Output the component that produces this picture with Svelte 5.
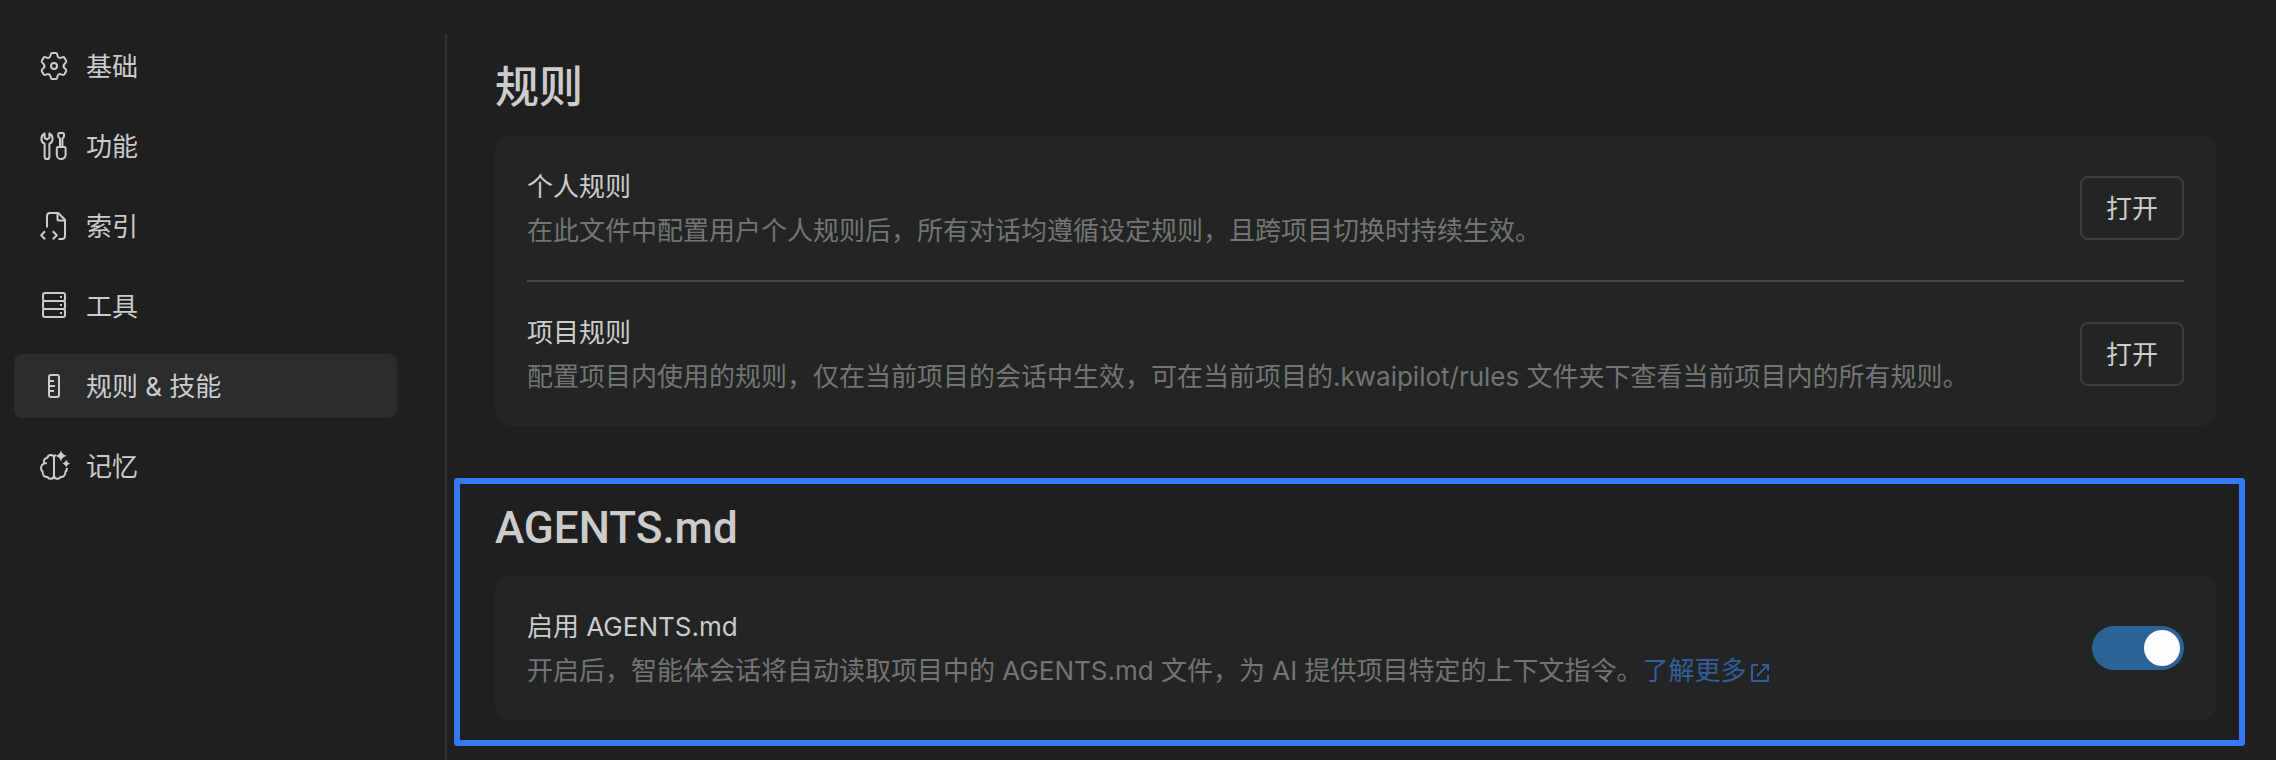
<script>
  // Settings page: rules & skills tab with the AGENTS.md switch.
  const navItems = [
    { id: 'basic', label: '基础' },
    { id: 'features', label: '功能' },
    { id: 'index', label: '索引' },
    { id: 'tools', label: '工具' },
    { id: 'rules', label: '规则 & 技能' },
    { id: 'memory', label: '记忆' }
  ];

  const rules = [
    {
      id: 'personal',
      title: '个人规则',
      desc: '在此文件中配置用户个人规则后，所有对话均遵循设定规则，且跨项目切换时持续生效。'
    },
    {
      id: 'project',
      title: '项目规则',
      desc: '配置项目内使用的规则，仅在当前项目的会话中生效，可在当前项目的.kwaipilot/rules 文件夹下查看当前项目内的所有规则。'
    }
  ];

  let active = $state('rules');
  let agentsEnabled = $state(true);
</script>

<div class="settings">
  <nav class="sidebar">
    {#each navItems as item}
      <a
        class="nav-item"
        class:active={active === item.id}
        href={`#${item.id}`}
        onclick={() => (active = item.id)}
      >
        <svg class="nav-icon" viewBox="0 0 28 28" aria-hidden="true">
          {#if item.id === 'basic'}
            <g transform="translate(14 14)">
              <path d="M-2-13H2C3.4-13 3.2-11.6 3.4-10.6 3.8-8.4 5.6-7.4 7.4-8.3 8.6-8.8 9.6-9.6 10.4-8.3L12.2-5.2C13-3.9 11.4-3.1 10.7-2.4 9.3-1 9.3 1 10.7 2.4 11.4 3.1 13 3.9 12.2 5.2L10.4 8.3C9.6 9.6 8.6 8.8 7.4 8.3 5.6 7.4 3.8 8.4 3.4 10.6 3.2 11.6 3.4 13 2 13H-2C-3.4 13-3.2 11.6-3.4 10.6-3.8 8.4-5.6 7.4-7.4 8.3-8.6 8.8-9.6 9.6-10.4 8.3L-12.2 5.2C-13 3.9-11.4 3.1-10.7 2.4-9.3 1-9.3-1-10.7-2.4-11.4-3.1-13-3.9-12.2-5.2L-10.4-8.3C-9.6-9.6-8.6-8.8-7.4-8.3-5.6-7.4-3.8-8.4-3.4-10.6-3.2-11.6-3.4-13-2-13Z" />
              <circle r="3" />
            </g>
          {:else if item.id === 'features'}
            <path d="M4.6 1.4A6 6 0 0 0 4.6 12V24.7a2.4 2.4 0 0 0 4.8 0V12A6 6 0 0 0 9.4 1.4V5.8L7 7.4 4.6 5.8Z" />
            <path d="M20 14.5V6.6L18.2 4.6V2.6A1.6 1.6 0 0 1 19.8 1h2.6A1.6 1.6 0 0 1 24 2.6v2L22.4 6.6v7.9" />
            <path d="M18 15h6.4a1.2 1.2 0 0 1 1.2 1.2v6.5a4.4 4.4 0 0 1-8.8 0v-6.5A1.2 1.2 0 0 1 18 15Z" />
          {:else if item.id === 'index'}
            <path d="M7 15.5V4a3 3 0 0 1 3-3h8.2L25 7.8V24a3 3 0 0 1-3 3h-3.5" />
            <path d="M17.5 1.2V7A1.5 1.5 0 0 0 19 8.5h6" />
            <path d="M5 19.2L1.2 23.2 5 27.2M12.8 19.2l4 4-4 4" />
          {:else if item.id === 'tools'}
            <rect x="3" y="1" width="22" height="8" rx="2" />
            <rect x="3" y="9" width="22" height="8" rx="2" />
            <rect x="3" y="17" width="22" height="8" rx="2" />
            <path d="M20 5h2M20 13h2M20 21h2" />
          {:else if item.id === 'rules'}
            <rect x="9" y="3" width="10" height="22" rx="2" />
            <path d="M9 9h5M9 14h6M9 19h5" />
          {:else}
            <path d="M14 5.5c-.5-3.5-6-3.5-6.5.2-3 .3-4.6 3-3.3 5.6-3.5 1.5-4.3 6-1.5 8.7-.5 3.5 2.5 5.5 4.8 5 1.5 2.8 6 2.3 6.5-1Z" />
            <path d="M4.2 11.3h2.6M14 5.5c.2-1.2 1-2.1 1.8-2.6M14 24c.5 3.3 5 3.8 6.5 1 2.3.5 5.3-1.5 4.8-5 1.2-1.2 1.7-2.6 1.6-4" />
            <path class="solid" d="M21-1.8C22.2 1.6 23.2 2.6 26.8 3.8 23.2 5 22.2 6 21 9.4 19.8 6 18.8 5 15.2 3.8 18.8 2.6 19.8 1.6 21-1.8ZM26.2 7.6c.8 2.4 1.6 3.2 4 4-2.4.8-3.2 1.6-4 4-.8-2.4-1.6-3.2-4-4 2.4-.8 3.2-1.6 4-4Z" />
          {/if}
        </svg>
        <span class="nav-label">{item.label}</span>
      </a>
    {/each}
  </nav>

  <main class="content">
    <section>
      <h2>规则</h2>
      <div class="card">
        {#each rules as rule}
          <div class="row">
            <div class="info">
              <div class="title" id={`${rule.id}-title`}>{rule.title}</div>
              <div class="desc">{rule.desc}</div>
            </div>
            <button class="open-btn" type="button" aria-describedby={`${rule.id}-title`}>打开</button>
          </div>
        {/each}
      </div>
    </section>

    <section class="highlight">
      <h2>AGENTS.md</h2>
      <div class="card">
        <div class="row">
          <div class="info">
            <label class="title" for="agents-switch">启用 AGENTS.md</label>
            <div class="desc">
              开启后，智能体会话将自动读取项目中的 AGENTS.md 文件，为 AI 提供项目特定的上下文指令。<a class="more" href="#agents-docs">了解更多<svg class="more-icon" viewBox="0 0 18 18" aria-hidden="true"><path d="M7 1H2a1 1 0 0 0-1 1v14a1 1 0 0 0 1 1h14a1 1 0 0 0 1-1v-5M11 1h6v6M17 1L6 12" /></svg></a>
            </div>
          </div>
          <input id="agents-switch" class="switch" type="checkbox" role="switch" bind:checked={agentsEnabled} />
        </div>
      </div>
    </section>
  </main>
</div>

<style>
  :global(body) {
    margin: 0;
    background: #1f1f1f;
    color-scheme: dark;
  }
  .settings {
    display: flex;
    box-sizing: border-box;
    min-height: 100vh;
    padding-top: 34px;
    color: #cccccc;
    font-family: Inter, "Noto Sans CJK SC", sans-serif;
    font-size: 26px;
    line-height: 44px;
  }

  /* sidebar */
  .sidebar {
    display: flex;
    flex-direction: column;
    flex: 0 0 383px;
    gap: 16px;
    padding: 0 48px 0 14px;
    border-right: 2px solid #313131;
  }
  .nav-item {
    display: flex;
    align-items: center;
    gap: 18px;
    height: 64px;
    padding: 0 26px;
    border-radius: 8px;
    color: inherit;
    text-decoration: none;
  }
  .nav-item.active { background: #2b2c2d; }
  .nav-label { padding-top: 2px; }
  .nav-icon {
    width: 28px;
    height: 28px;
    overflow: visible;
    fill: none;
    stroke: currentColor;
    stroke-width: 2;
    stroke-linejoin: round;
  }
  .nav-icon .solid { fill: currentColor; stroke: none; }

  /* content */
  .content {
    flex: 1;
    min-width: 0;
    padding: 28px 60px 0 48px;
  }
  h2 {
    margin: 0 0 22px;
    font-family: Roboto, "Noto Sans CJK SC", sans-serif;
    font-size: 44px;
    font-weight: 500;
    line-height: 52px;
  }
  .card {
    padding: 0 32px;
    border-radius: 16px;
    background: #232524;
  }
  .row {
    display: flex;
    align-items: center;
    justify-content: space-between;
    gap: 32px;
    padding: 27px 0;
  }
  .row + .row { border-top: 2px solid #454646; }
  .info { padding-top: 2px; }
  .title { display: block; }
  .desc { color: #737473; }

  .open-btn {
    flex: none;
    height: 64px;
    padding: 2px 24px 0;
    border: 2px solid #3c3e3d;
    border-radius: 8px;
    background: transparent;
    color: inherit;
    font: inherit;
  }

  /* framed section */
  .highlight {
    margin: 52px -29px 0 -41px;
    padding: 18px 23px 20px 35px;
    border: 6px solid #3478f6;
    border-radius: 3px;
  }
  .more { color: #355d9b; text-decoration: none; }
  .more-icon {
    width: 18px;
    height: 18px;
    margin-left: 4px;
    vertical-align: -2px;
    fill: none;
    stroke: currentColor;
    stroke-width: 2;
  }
  .switch {
    display: flex;
    flex: none;
    appearance: none;
    box-sizing: border-box;
    width: 92px;
    height: 44px;
    margin: 0;
    padding: 4px;
    border-radius: 22px;
    background: #4a4a4a;
  }
  .switch::before {
    width: 36px;
    height: 36px;
    border-radius: 50%;
    background: #fdfdfd;
    content: '';
  }
  .switch:checked { justify-content: flex-end; background: #2c6397; }
</style>
